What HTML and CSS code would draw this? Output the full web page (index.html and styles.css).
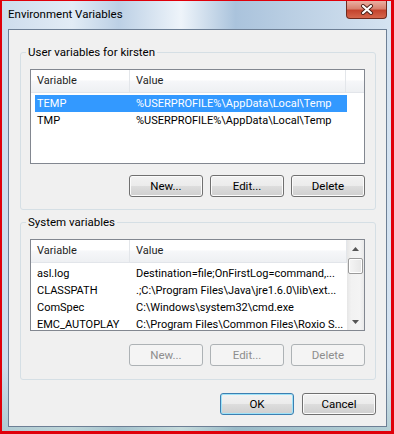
FILE: index.html
```html
<!DOCTYPE html>
<html lang="en">
<head>
    <meta charset="UTF-8">
    <title>Environment Variables</title>
    <link rel="stylesheet" href="styles.css">
</head>
<body>
<div class="screen">
    <div class="window">
        <div class="titlebar">
            <span class="title">Environment Variables</span>
            <div class="close">
                <svg width="14" height="11" viewBox="0 0 14 11">
                    <path d="M3 2 L11 9 M11 2 L3 9" stroke="#4a2018" stroke-width="4" stroke-linecap="round"/>
                    <path d="M3 2 L11 9 M11 2 L3 9" stroke="#fff" stroke-width="2.2" stroke-linecap="round"/>
                </svg>
            </div>
        </div>

        <div class="client">
            <fieldset class="group">
                <legend>User variables for kirsten</legend>
                <div class="list user-list">
                    <div class="head">
                        <span class="h-var">Variable</span>
                        <span class="h-val">Value</span>
                        <span class="h-fill"></span>
                    </div>
                    <div class="rows">
                        <div class="row selected"><span class="c-var">TEMP</span><span class="c-val">%USERPROFILE%\AppData\Local\Temp</span></div>
                        <div class="row"><span class="c-var">TMP</span><span class="c-val">%USERPROFILE%\AppData\Local\Temp</span></div>
                    </div>
                </div>
                <div class="btn-row">
                    <button>New...</button>
                    <button>Edit...</button>
                    <button>Delete</button>
                </div>
            </fieldset>

            <fieldset class="group sys">
                <legend>System variables</legend>
                <div class="list sys-list">
                    <div class="main">
                        <div class="head">
                            <span class="h-var">Variable</span>
                            <span class="h-val">Value</span>
                        </div>
                        <div class="rows">
                            <div class="row"><span class="c-var">asl.log</span><span class="c-val">Destination=file;OnFirstLog=command,...</span></div>
                            <div class="row"><span class="c-var">CLASSPATH</span><span class="c-val">.;C:\Program Files\Java\jre1.6.0\lib\ext...</span></div>
                            <div class="row"><span class="c-var">ComSpec</span><span class="c-val">C:\Windows\system32\cmd.exe</span></div>
                            <div class="row"><span class="c-var">EMC_AUTOPLAY</span><span class="c-val">C:\Program Files\Common Files\Roxio S...</span></div>
                        </div>
                    </div>
                    <div class="scrollbar">
                        <div class="arrow">
                            <svg width="7" height="4" viewBox="0 0 7 4"><path d="M0 4 L3.5 0 L7 4 Z" fill="#555"/></svg>
                        </div>
                        <div class="thumb"></div>
                        <div class="track"></div>
                        <div class="arrow">
                            <svg width="7" height="4" viewBox="0 0 7 4"><path d="M0 0 L3.5 4 L7 0 Z" fill="#555"/></svg>
                        </div>
                    </div>
                </div>
                <div class="btn-row">
                    <button disabled>New...</button>
                    <button disabled>Edit...</button>
                    <button disabled>Delete</button>
                </div>
            </fieldset>

            <div class="btn-row dialog-btns">
                <button class="default">OK</button>
                <button>Cancel</button>
            </div>
        </div>
    </div>
</div>
</body>
</html>
```

FILE: styles.css
```css
* {
    box-sizing: border-box;
}
body {
    margin: 0;
    background: #e0000a;
    font-family: Roboto, "Noto Sans", sans-serif;
    font-size: 11px;
    color: #000;
}
.screen {
    width: 394px;
    height: 434px;
    padding: 1px 3px 3px 2px;
}
.window {
    height: 430px;
    padding: 0 4px 4px 6px;
    display: flex;
    flex-direction: column;
    background:
        linear-gradient(180deg, rgba(255,255,255,0) 85%, rgba(120,170,160,0.35) 100%),
        linear-gradient(90deg, #cddcec 0%, #e2ecf6 18%, #bcd0e5 30%, #eef4fa 46%, #aac3dc 60%, #bcd0e4 76%, #d5e3f1 100%);
}
.titlebar {
    height: 28px;
    display: flex;
    justify-content: space-between;
    align-items: flex-start;
}
.title {
    margin-top: 5px;
    line-height: 16px;
    font-size: 11.5px;
}
.close {
    width: 41px;
    height: 18px;
    display: flex;
    align-items: center;
    justify-content: center;
    border: 1px solid #6f2a1e;
    border-top: none;
    border-radius: 0 0 4px 4px;
    background: linear-gradient(180deg, #eab0a2 0%, #d98270 45%, #c4442e 55%, #d5664c 100%);
}
.client {
    flex: 1;
    border: 1px solid #6d7f95;
    background: #f0f0f0;
    padding: 14px 10px 0 11px;
}
.group {
    margin: 0;
    border: 1px solid #d5dfe5;
    border-radius: 3px;
    padding: 9px 10px 12px 9px;
}
.group legend {
    padding: 0 2px;
    margin-left: -4px;
    line-height: 16px;
    font-size: 11.5px;
}
.group.sys {
    margin-top: 4px;
    padding-bottom: 13px;
}
.list {
    height: 95px;
    border: 1px solid #828790;
    background: #fff;
    overflow: hidden;
}
.head {
    height: 23px;
    display: flex;
    background: linear-gradient(180deg, #ffffff 0%, #ffffff 45%, #f6f7f9 50%, #eef0f3 100%);
    border-bottom: 1px solid #e2e5ea;
    color: #1e1e1e;
}
.head span {
    line-height: 22px;
    padding-left: 6px;
    border-right: 1px solid #e3e6ea;
}
.h-var {
    width: 99px;
}
.h-val {
    width: 216px;
}
.h-fill {
    flex: 1;
    border-right: none !important;
}
.rows {
    padding-top: 2px;
}
.row {
    display: flex;
    height: 17px;
    line-height: 17px;
    margin-left: 4px;
    width: 312px;
    white-space: nowrap;
}
.row.selected {
    background: #3399ff;
    color: #fff;
}
.c-var {
    width: 95px;
    padding-left: 2px;
}
.c-val {
    flex: 1;
    padding-left: 6px;
    overflow: hidden;
}
.sys-list {
    height: 92px;
    display: flex;
}
.sys-list .main {
    flex: 1;
    overflow: hidden;
}
.sys-list .h-val {
    flex: 1;
    width: auto;
}
.scrollbar {
    width: 17px;
    display: flex;
    flex-direction: column;
    background: linear-gradient(90deg, #e6e6e6 0%, #f2f2f2 25%, #f4f4f4 75%, #e9e9e9 100%);
}
.arrow {
    height: 17px;
    display: flex;
    align-items: center;
    justify-content: center;
}
.thumb {
    height: 16px;
    margin: 1px 1px 0 1px;
    border: 1px solid #9b9b9b;
    border-radius: 2px;
    background: linear-gradient(90deg, #f5f5f5, #e6e6e6);
    box-shadow: inset 0 0 0 1px #fff;
}
.track {
    flex: 1;
}
.btn-row {
    display: flex;
    justify-content: flex-end;
    gap: 7px;
    margin-top: 11px;
}
.sys .btn-row {
    margin-top: 13px;
}
button {
    width: 74px;
    height: 22px;
    padding: 0;
    font-family: Roboto, "Noto Sans", sans-serif;
    font-size: 11.5px;
    color: #000;
    border: 1px solid #707070;
    border-radius: 3px;
    background: linear-gradient(180deg, #f2f2f2 0%, #ebebeb 50%, #dddddd 51%, #cfcfcf 100%);
    box-shadow: inset 0 0 0 1px #fbfbfb;
}
button:disabled {
    color: #8d8d8d;
    border-color: #adb2b5;
    background: #f4f4f4;
    box-shadow: none;
}
button.default {
    border-color: #3c7fb1;
    box-shadow: inset 0 0 0 1px #9ee2f8;
}
.dialog-btns {
    gap: 8px;
    margin-top: 13px;
}
```
